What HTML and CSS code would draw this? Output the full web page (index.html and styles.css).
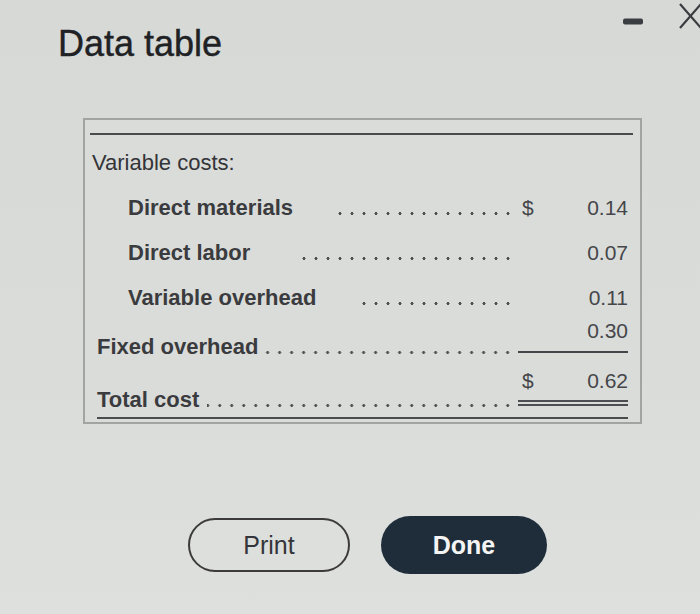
FILE: index.html
```html
<!DOCTYPE html>
<html lang="en">
<head>
<meta charset="utf-8">
<title>Data table</title>
<link rel="stylesheet" href="styles.css">
</head>
<body>
<div class="dialog">
  <header class="titlebar">
    <h1 class="title">Data table</h1>
    <div class="controls">
      <svg class="icon-min" width="20" height="7" viewBox="0 0 20 7"><rect x="0" y="0.5" width="20" height="6" rx="2" fill="#3a3d42"/></svg>
      <svg class="icon-close" width="21" height="26" viewBox="0 0 21 26"><path d="M1 1 L22 25 M22 1 L1 25" stroke="#3a3c40" stroke-width="2.2" fill="none"/></svg>
    </div>
  </header>

  <section class="table-box">
    <div class="rule"></div>
    <div class="rows">
      <div class="row">
        <div class="lead lead-section"><span class="label">Variable costs:</span></div>
        <div class="amt"></div>
      </div>
      <div class="row">
        <div class="lead lead-indent"><span class="label strong">Direct materials</span><span class="dots dots-materials"></span></div>
        <div class="amt"><span class="cur">$</span><span class="num">0.14</span></div>
      </div>
      <div class="row">
        <div class="lead lead-indent"><span class="label strong">Direct labor</span><span class="dots dots-labor"></span></div>
        <div class="amt"><span class="num">0.07</span></div>
      </div>
      <div class="row">
        <div class="lead lead-indent"><span class="label strong">Variable overhead</span><span class="dots dots-overhead"></span></div>
        <div class="amt"><span class="num">0.11</span></div>
      </div>
      <div class="row row-fixed">
        <div class="lead lead-outer"><span class="label strong">Fixed overhead</span><span class="dots dots-fill"></span></div>
        <div class="amt amt-single"><span class="num">0.30</span></div>
      </div>
      <div class="row row-total">
        <div class="lead lead-outer"><span class="label strong">Total cost</span><span class="dots dots-fill dots-total"></span></div>
        <div class="amt amt-double"><span class="cur">$</span><span class="num">0.62</span></div>
      </div>
      <div class="rule rule-bottom"></div>
    </div>
  </section>

  <div class="buttons">
    <button class="btn btn-print">Print</button>
    <button class="btn btn-done">Done</button>
  </div>
</div>
</body>
</html>
```

FILE: styles.css
```css
* { box-sizing: border-box; }

html, body {
  margin: 0;
  padding: 0;
}

body {
  width: 700px;
  height: 614px;
  overflow: hidden;
  background: linear-gradient(180deg, #d6d9d5 0%, #d9dcd8 60%, #dde0dd 100%);
  font-family: "Liberation Sans", Arial, sans-serif;
  color: #303134;
}

.dialog {
  width: 700px;
  height: 614px;
}

.titlebar {
  display: flex;
  align-items: flex-start;
  height: 64px;
}

.title {
  flex: 1;
  margin: 0;
  padding: 24px 0 0 58px;
  font-size: 36px;
  line-height: 40px;
  font-weight: 400;
  color: #202124;
  -webkit-text-stroke: 0.4px #202124;
}

.controls {
  display: flex;
  align-items: flex-start;
  padding-top: 3px;
}

.icon-min {
  display: block;
  margin-top: 15px;
  margin-right: 36px;
}

.icon-close {
  display: block;
}

.table-box {
  margin: 54px 0 0 83px;
  width: 559px;
  border: 2px solid #a2a4a1;
  background: #dadcd9;
  padding: 13px 7px 3px 5px;
}

.rule {
  height: 2px;
  background: #4a4b4d;
}

.rows {
  padding-right: 5px;
}

.row {
  display: grid;
  grid-template-columns: 1fr 110px;
  column-gap: 3px;
  font-size: 22px;
  line-height: 45px;
}

.rows > .row:first-child {
  margin-top: 5px;
}

.lead {
  display: flex;
  align-items: baseline;
  min-width: 0;
}

.lead-section { padding-left: 2px; }
.lead-indent { padding-left: 38px; }
.lead-outer { padding-left: 7px; }

.label {
  white-space: nowrap;
  color: #333438;
}

.strong {
  font-weight: 700;
  color: #3a3b3e;
}

.dots {
  height: 3px;
  background-image: radial-gradient(circle, #505154 1.3px, transparent 1.8px);
  background-size: 12px 3px;
  background-repeat: repeat-x;
  background-position: right 1px bottom 0;
}

.dots-materials { width: 180px; margin-left: auto; }
.dots-labor { width: 217px; margin-left: auto; }
.dots-overhead { width: 155px; margin-left: auto; }
.dots-fill { flex: 1; margin-left: 2px; }
.dots-total { margin-left: 8px; }

.amt {
  display: flex;
  align-items: baseline;
  padding-left: 4px;
  font-size: 21px;
  color: #45464a;
}

.cur {
  color: #45464a;
}

.num {
  margin-left: auto;
}

.row-fixed .lead {
  padding-top: 16px;
  line-height: 22px;
}

.amt-single {
  align-self: start;
  line-height: 22px;
  padding-bottom: 9px;
  border-bottom: 2px solid #44454a;
}

.row-total .lead {
  padding-top: 31px;
  line-height: 22px;
}

.amt-double {
  align-self: start;
  line-height: 22px;
  padding-top: 12px;
  padding-bottom: 8px;
  border-bottom: 6px double #4c4d51;
}

.rule-bottom {
  margin: 6px 0 0 7px;
}

.buttons {
  display: flex;
  align-items: center;
  gap: 31px;
  margin-top: 92px;
  padding-left: 188px;
  height: 58px;
}

.btn {
  font-family: "Liberation Sans", Arial, sans-serif;
  font-size: 25px;
  border-radius: 30px;
  cursor: pointer;
  padding: 0;
}

.btn-print {
  width: 162px;
  height: 54px;
  background: transparent;
  border: 2.5px solid #3c3a3b;
  color: #34353a;
  font-weight: 400;
}

.btn-done {
  width: 166px;
  height: 58px;
  background: #1f2d3a;
  border: none;
  color: #f4f4f4;
  font-weight: 700;
}
```
